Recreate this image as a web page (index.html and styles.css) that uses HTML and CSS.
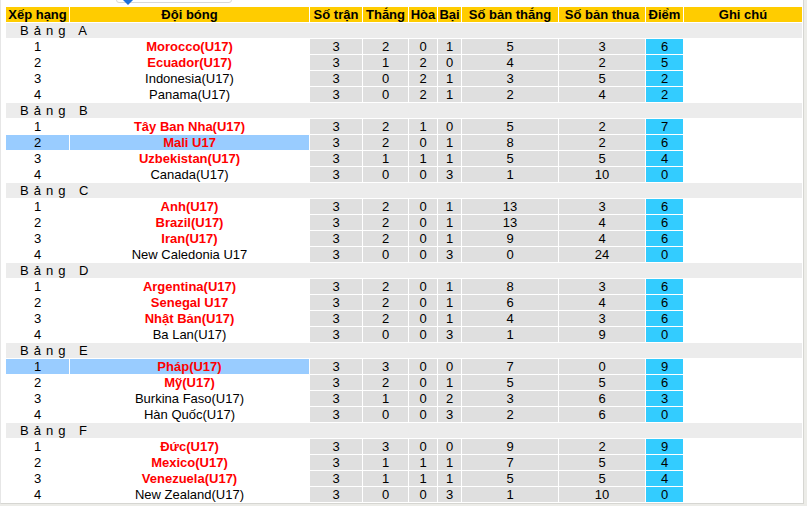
FILE: index.html
```html
<!DOCTYPE html>
<html lang="vi">
<head>
<meta charset="utf-8">
<title>Bảng xếp hạng U17</title>
<link rel="stylesheet" href="styles.css">
</head>
<body>
<div class="frame">
  <div class="tab-stub"><span class="tab-arrow"></span></div>
  <table class="standings">
    <colgroup>
      <col class="c-rank"><col class="c-team"><col class="c-p"><col class="c-w"><col class="c-d"><col class="c-l"><col class="c-gf"><col class="c-ga"><col class="c-pts"><col class="c-note">
    </colgroup>
    <thead>
      <tr class="head"><th>Xếp hạng</th><th>Đội bóng</th><th>Số trận</th><th>Thắng</th><th>Hòa</th><th>Bại</th><th>Số bản thắng</th><th>Số bản thua</th><th>Điểm</th><th>Ghi chú</th></tr>
    </thead>
    <tbody>
      <tr class="group"><td colspan="10">Bảng A</td></tr>
      <tr><td class="rank">1</td><td class="team q">Morocco(U17)</td><td class="n">3</td><td class="n">2</td><td class="n">0</td><td class="n">1</td><td class="n">5</td><td class="n">3</td><td class="pts">6</td><td class="note"></td></tr>
      <tr><td class="rank">2</td><td class="team q">Ecuador(U17)</td><td class="n">3</td><td class="n">1</td><td class="n">2</td><td class="n">0</td><td class="n">4</td><td class="n">2</td><td class="pts">5</td><td class="note"></td></tr>
      <tr><td class="rank">3</td><td class="team">Indonesia(U17)</td><td class="n">3</td><td class="n">0</td><td class="n">2</td><td class="n">1</td><td class="n">3</td><td class="n">5</td><td class="pts">2</td><td class="note"></td></tr>
      <tr><td class="rank">4</td><td class="team">Panama(U17)</td><td class="n">3</td><td class="n">0</td><td class="n">2</td><td class="n">1</td><td class="n">2</td><td class="n">4</td><td class="pts">2</td><td class="note"></td></tr>

      <tr class="group"><td colspan="10">Bảng B</td></tr>
      <tr><td class="rank">1</td><td class="team q">Tây Ban Nha(U17)</td><td class="n">3</td><td class="n">2</td><td class="n">1</td><td class="n">0</td><td class="n">5</td><td class="n">2</td><td class="pts">7</td><td class="note"></td></tr>
      <tr class="hl"><td class="rank">2</td><td class="team q">Mali U17</td><td class="n">3</td><td class="n">2</td><td class="n">0</td><td class="n">1</td><td class="n">8</td><td class="n">2</td><td class="pts">6</td><td class="note"></td></tr>
      <tr><td class="rank">3</td><td class="team q">Uzbekistan(U17)</td><td class="n">3</td><td class="n">1</td><td class="n">1</td><td class="n">1</td><td class="n">5</td><td class="n">5</td><td class="pts">4</td><td class="note"></td></tr>
      <tr><td class="rank">4</td><td class="team">Canada(U17)</td><td class="n">3</td><td class="n">0</td><td class="n">0</td><td class="n">3</td><td class="n">1</td><td class="n">10</td><td class="pts">0</td><td class="note"></td></tr>

      <tr class="group"><td colspan="10">Bảng C</td></tr>
      <tr><td class="rank">1</td><td class="team q">Anh(U17)</td><td class="n">3</td><td class="n">2</td><td class="n">0</td><td class="n">1</td><td class="n">13</td><td class="n">3</td><td class="pts">6</td><td class="note"></td></tr>
      <tr><td class="rank">2</td><td class="team q">Brazil(U17)</td><td class="n">3</td><td class="n">2</td><td class="n">0</td><td class="n">1</td><td class="n">13</td><td class="n">4</td><td class="pts">6</td><td class="note"></td></tr>
      <tr><td class="rank">3</td><td class="team q">Iran(U17)</td><td class="n">3</td><td class="n">2</td><td class="n">0</td><td class="n">1</td><td class="n">9</td><td class="n">4</td><td class="pts">6</td><td class="note"></td></tr>
      <tr><td class="rank">4</td><td class="team">New Caledonia U17</td><td class="n">3</td><td class="n">0</td><td class="n">0</td><td class="n">3</td><td class="n">0</td><td class="n">24</td><td class="pts">0</td><td class="note"></td></tr>

      <tr class="group"><td colspan="10">Bảng D</td></tr>
      <tr><td class="rank">1</td><td class="team q">Argentina(U17)</td><td class="n">3</td><td class="n">2</td><td class="n">0</td><td class="n">1</td><td class="n">8</td><td class="n">3</td><td class="pts">6</td><td class="note"></td></tr>
      <tr><td class="rank">2</td><td class="team q">Senegal U17</td><td class="n">3</td><td class="n">2</td><td class="n">0</td><td class="n">1</td><td class="n">6</td><td class="n">4</td><td class="pts">6</td><td class="note"></td></tr>
      <tr><td class="rank">3</td><td class="team q">Nhật Bản(U17)</td><td class="n">3</td><td class="n">2</td><td class="n">0</td><td class="n">1</td><td class="n">4</td><td class="n">3</td><td class="pts">6</td><td class="note"></td></tr>
      <tr><td class="rank">4</td><td class="team">Ba Lan(U17)</td><td class="n">3</td><td class="n">0</td><td class="n">0</td><td class="n">3</td><td class="n">1</td><td class="n">9</td><td class="pts">0</td><td class="note"></td></tr>

      <tr class="group"><td colspan="10">Bảng E</td></tr>
      <tr class="hl"><td class="rank">1</td><td class="team q">Pháp(U17)</td><td class="n">3</td><td class="n">3</td><td class="n">0</td><td class="n">0</td><td class="n">7</td><td class="n">0</td><td class="pts">9</td><td class="note"></td></tr>
      <tr><td class="rank">2</td><td class="team q">Mỹ(U17)</td><td class="n">3</td><td class="n">2</td><td class="n">0</td><td class="n">1</td><td class="n">5</td><td class="n">5</td><td class="pts">6</td><td class="note"></td></tr>
      <tr><td class="rank">3</td><td class="team">Burkina Faso(U17)</td><td class="n">3</td><td class="n">1</td><td class="n">0</td><td class="n">2</td><td class="n">3</td><td class="n">6</td><td class="pts">3</td><td class="note"></td></tr>
      <tr><td class="rank">4</td><td class="team">Hàn Quốc(U17)</td><td class="n">3</td><td class="n">0</td><td class="n">0</td><td class="n">3</td><td class="n">2</td><td class="n">6</td><td class="pts">0</td><td class="note"></td></tr>

      <tr class="group"><td colspan="10">Bảng F</td></tr>
      <tr><td class="rank">1</td><td class="team q">Đức(U17)</td><td class="n">3</td><td class="n">3</td><td class="n">0</td><td class="n">0</td><td class="n">9</td><td class="n">2</td><td class="pts">9</td><td class="note"></td></tr>
      <tr><td class="rank">2</td><td class="team q">Mexico(U17)</td><td class="n">3</td><td class="n">1</td><td class="n">1</td><td class="n">1</td><td class="n">7</td><td class="n">5</td><td class="pts">4</td><td class="note"></td></tr>
      <tr><td class="rank">3</td><td class="team q">Venezuela(U17)</td><td class="n">3</td><td class="n">1</td><td class="n">1</td><td class="n">1</td><td class="n">5</td><td class="n">5</td><td class="pts">4</td><td class="note"></td></tr>
      <tr><td class="rank">4</td><td class="team">New Zealand(U17)</td><td class="n">3</td><td class="n">0</td><td class="n">0</td><td class="n">3</td><td class="n">1</td><td class="n">10</td><td class="pts">0</td><td class="note"></td></tr>
    </tbody>
  </table>
</div>
</body>
</html>
```
FILE: styles.css
```css
html, body {
  margin: 0;
  padding: 0;
  background: #ecece8;
}
body {
  font-family: "Liberation Sans", Arial, sans-serif;
  font-size: 13px;
  color: #000;
}
.frame {
  position: relative;
  box-sizing: border-box;
  width: 804px;
  height: 504px;
  background: #fff;
  border-left: 1px solid #e6e6e6;
  border-right: 1px solid #d6d6d2;
  border-bottom: 1px solid #d6d6d2;
  padding: 6px 0 0 4px;
}
.tab-stub {
  position: absolute;
  left: 115px;
  top: -4px;
  width: 116px;
  height: 7px;
  box-sizing: border-box;
  background: #fff;
  border: 1px solid #d8d8d8;
  border-radius: 3px;
}
.tab-arrow {
  position: absolute;
  left: 6px;
  top: 3px;
  width: 0;
  height: 0;
  border-left: 5px solid transparent;
  border-right: 5px solid transparent;
  border-top: 5px solid #1e6fd9;
}
.standings {
  border-collapse: separate;
  border-spacing: 1px;
  table-layout: fixed;
  width: 797px;
}
.c-rank { width: 63px; }
.c-team { width: 239px; }
.c-p { width: 52px; }
.c-w { width: 45px; }
.c-d { width: 28px; }
.c-l { width: 23px; }
.c-gf { width: 96px; }
.c-ga { width: 86px; }
.c-pts { width: 37px; }
.c-note { width: 118px; }

.standings th,
.standings td {
  height: 15px;
  padding: 0;
  line-height: 15px;
  text-align: center;
  white-space: nowrap;
  overflow: hidden;
}
.head th {
  background: #ffcc00;
  font-weight: bold;
}
.group td {
  background: #ececec;
  text-align: left;
  padding-left: 14px;
  letter-spacing: 5px;
}
.rank, .team { background: #fff; }
.team.q { color: #ff0000; font-weight: bold; }
.hl .rank, .hl .team { background: #99ccff; }
.n { background: #dfdfdf; }
.pts { background: #33ccff; }
.note { background: #fff; }
```
